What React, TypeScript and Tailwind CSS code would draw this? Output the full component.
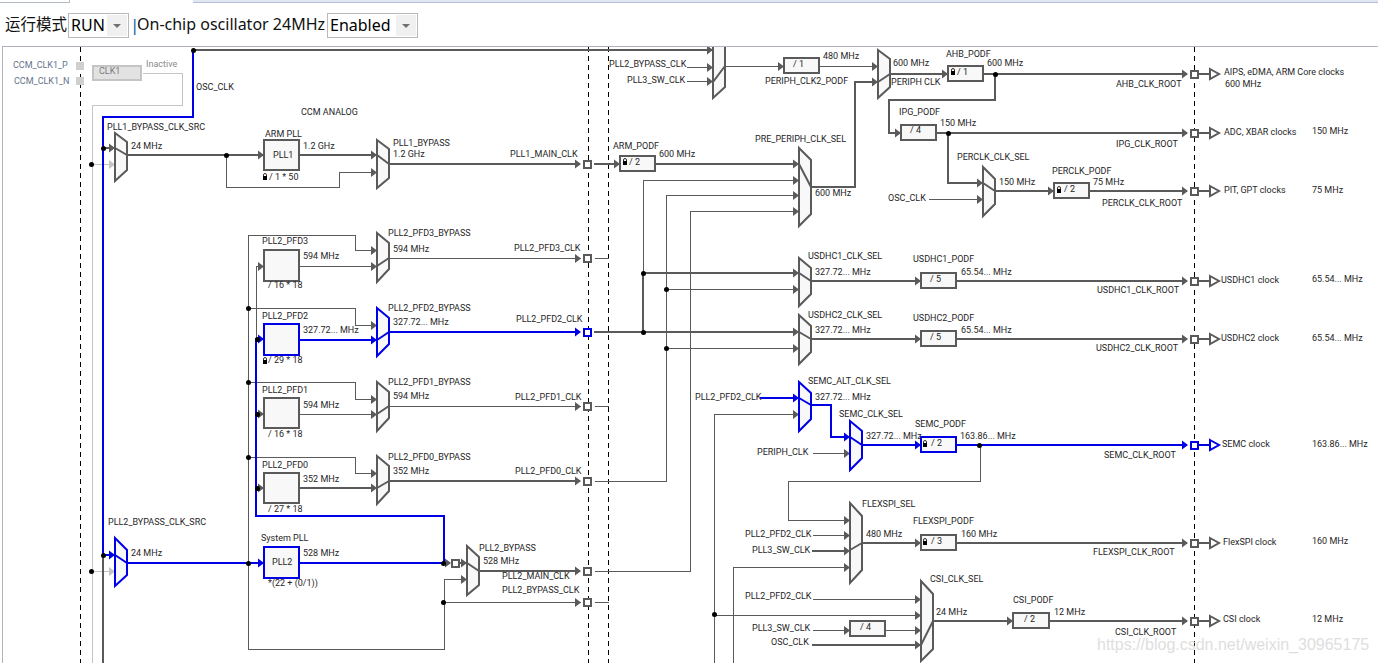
import React from "react";

const G = "#5a5a5a";
const B = "#0000e6";
const L = "#c4c4c4";

type P = [number, number];
type Wire = { p: P[]; c?: string; w?: number; a?: boolean };

const thick = (p: P[], a = true): Wire => ({ p, c: G, w: 2, a });
const thin = (p: P[], a = true): Wire => ({ p, c: G, w: 1, a });
const blue = (p: P[], a = true): Wire => ({ p, c: B, w: 2, a });
const light = (p: P[], a = false): Wire => ({ p, c: L, w: 1, a });

const wires: Wire[] = [
  light([[142, 73], [182, 73], [182, 105], [92, 105], [92, 663]]),
  light([[92, 164], [114, 164]], true),
  light([[92, 571], [114, 571]], true),
  thick([[103, 555], [103, 663]], false),
  thick([[193, 50], [712, 50]]),
  thick([[103, 148], [114, 148]]),
  thick([[127, 155], [263, 155]]),
  thick([[299, 155], [376, 155]]),
  thin([[226, 155], [226, 187], [339, 187], [339, 172], [376, 172]]),
  thick([[389, 164], [580, 164]]),
  thick([[594, 164], [619, 164]]),
  thick([[655, 164], [798, 164]]),
  thin([[686, 67], [712, 67]]),
  thin([[686, 81], [712, 81]]),
  thin([[725, 66], [783, 66]]),
  thin([[819, 66], [877, 66]]),
  thick([[811, 187], [855, 187], [855, 82], [877, 82]]),
  thick([[890, 74], [947, 74]]),
  thick([[983, 74], [1187, 74]]),
  thick([[995, 74], [995, 100], [889, 100], [889, 133], [900, 133]]),
  thick([[936, 133], [1187, 133]]),
  thick([[948, 133], [948, 183], [982, 183]]),
  thin([[928, 199], [982, 199]]),
  thick([[995, 191], [1053, 191]]),
  thick([[1089, 191], [1187, 191]]),
  thin([[643, 273], [643, 180], [798, 180]]),
  thin([[666, 481], [666, 195], [798, 195]]),
  thin([[690, 571], [690, 211], [798, 211]]),
  thick([[643, 273], [643, 332]], false),
  thick([[643, 273], [798, 273]]),
  thin([[666, 289], [798, 289]]),
  thick([[594, 332], [798, 332]]),
  thin([[666, 348], [798, 348]]),
  thick([[811, 281], [920, 281]]),
  thick([[956, 281], [1187, 281]]),
  thick([[811, 339], [920, 339]]),
  thick([[956, 339], [1187, 339]]),
  // PFD group
  thin([[248, 649], [248, 235], [355, 235], [355, 250], [376, 250]]),
  thin([[256, 339], [256, 266], [263, 266]]),
  thin([[299, 266], [376, 266]]),
  thin([[389, 258], [580, 258]]),
  thin([[594, 258], [608, 258]], false),
  thin([[248, 308], [355, 308], [355, 325], [376, 325]]),
  thin([[248, 382], [355, 382], [355, 399], [376, 399]]),
  thin([[299, 414], [376, 414]]),
  thin([[389, 406], [580, 406]]),
  thin([[594, 406], [608, 406]], false),
  thick([[257, 414], [263, 414]]),
  thin([[248, 457], [355, 457], [355, 473], [376, 473]]),
  thick([[299, 488], [376, 488]]),
  thick([[257, 488], [263, 488]]),
  thick([[389, 481], [580, 481]]),
  thin([[594, 481], [666, 481]], false),
  thick([[444, 563], [450, 563]]),
  thick([[460, 563], [466, 563]]),
  thin([[248, 649], [444, 649], [444, 579], [466, 579]]),
  thin([[444, 602], [580, 602]]),
  thin([[594, 602], [608, 602]], false),
  thick([[479, 571], [580, 571]]),
  thin([[594, 571], [690, 571]], false),
  // right column
  thin([[714, 663], [714, 414], [798, 414]]),
  thin([[812, 453], [849, 453]]),
  thin([[980, 445], [980, 481], [788, 481], [788, 520], [849, 520]]),
  thin([[812, 535], [849, 535]]),
  thick([[812, 551], [849, 551]]),
  thin([[733, 663], [733, 567], [849, 567]]),
  thick([[862, 543], [920, 543]]),
  thick([[956, 543], [1187, 543]]),
  thin([[812, 599], [920, 599]]),
  thin([[714, 615], [920, 615]]),
  thin([[812, 630], [849, 630]]),
  thin([[885, 630], [920, 630]]),
  thick([[812, 645], [920, 645]]),
  thick([[933, 621], [1012, 621]]),
  thick([[1049, 621], [1187, 621]]),
  // active blue path
  blue([[193, 50], [193, 117], [103, 117], [103, 555], [114, 555]]),
  blue([[127, 563], [263, 563]]),
  blue([[299, 563], [444, 563]], false),
  blue([[444, 563], [444, 516], [256, 516], [256, 339], [263, 339]]),
  blue([[299, 340], [376, 340]]),
  blue([[389, 332], [580, 332]]),
  blue([[760, 398], [798, 398]]),
  blue([[811, 405], [831, 405], [831, 437], [849, 437]]),
  blue([[862, 445], [920, 445]]),
  blue([[956, 445], [1187, 445]]),
];

type Mux = { p: P[]; s: [P, P]; c?: string };
const mux = (x: number, t: number, rt: number, rb: number, b: number, a: number, o: number, w = 12, c = G): Mux => ({
  p: [[x, t], [x + w, rt], [x + w, rb], [x, b]],
  s: [[x, a], [x + w, o]],
  c,
});

const muxes: Mux[] = [
  mux(115, 133, 142, 170, 181, 148, 155),
  mux(377, 140, 149, 178, 188, 155, 164),
  mux(713, 30, 40, 87, 98, 82, 66),
  mux(878, 50, 59, 87, 98, 82, 74),
  mux(799, 148, 160, 214, 226, 164, 187),
  mux(983, 167, 179, 204, 216, 183, 191),
  mux(377, 233, 243, 269, 282, 266, 258),
  mux(377, 308, 318, 344, 356, 340, 332, 12, B),
  mux(377, 382, 392, 418, 431, 414, 406),
  mux(377, 456, 466, 491, 504, 488, 481),
  mux(115, 538, 550, 575, 586, 555, 563, 12, B),
  mux(467, 546, 557, 585, 595, 563, 571),
  mux(799, 258, 268, 294, 306, 273, 281),
  mux(799, 315, 326, 352, 364, 332, 339),
  mux(799, 382, 393, 419, 431, 398, 405, 12, B),
  mux(850, 421, 431, 458, 470, 437, 445, 12, B),
  mux(850, 503, 516, 570, 583, 550, 543),
  mux(921, 581, 594, 649, 661, 645, 621),
];

type Box = [number, number, number, number, string?];
const boxes: Box[] = [
  [264, 140, 35, 30],
  [620, 156, 35, 15],
  [784, 58, 35, 15],
  [948, 66, 35, 15],
  [901, 125, 35, 15],
  [1054, 183, 35, 15],
  [264, 250, 35, 31],
  [264, 324, 35, 31, B],
  [264, 398, 35, 30],
  [264, 473, 35, 30],
  [264, 547, 35, 31, B],
  [921, 273, 35, 15],
  [921, 331, 35, 15],
  [921, 437, 35, 15, B],
  [921, 535, 35, 15],
  [850, 621, 35, 15],
  [1013, 613, 36, 15],
];

const pads: [number, number, string?][] = [
  [587, 164], [587, 258], [587, 332, B], [587, 406], [587, 481], [587, 571], [587, 602], [455, 563],
  [1194, 74], [1194, 133], [1194, 191], [1194, 281], [1194, 339], [1194, 445, B], [1194, 543], [1194, 621],
];

const outs: [number, string?][] = [[74], [133], [191], [281], [339], [445, B], [543], [621]];

const dots: P[] = [
  [193, 50], [103, 148], [91, 164], [226, 155], [103, 555], [91, 571],
  [248, 308], [248, 382], [248, 457], [248, 563], [257, 339], [257, 414], [257, 488],
  [443, 563], [443, 602], [995, 74], [948, 133], [643, 273], [643, 332], [666, 289], [666, 348], [979, 445], [714, 614],
];

const locks: P[] = [
  [265, 177], [625, 162], [953, 72], [1059, 190], [265, 361], [925, 444], [925, 542],
];

type T = [number, number, string, string?];
const labels: T[] = [
  [13, 65, "CCM_CLK1_P", "#64748b"], [14, 81, "CCM_CLK1_N", "#64748b"], [99, 71, "CLK1", "#7a7a7a"], [146, 64, "Inactive", "#8a8a8a"],
  [196, 87, "OSC_CLK"], [301, 112, "CCM ANALOG"], [107, 127, "PLL1_BYPASS_CLK_SRC"], [131, 146, "24 MHz"],
  [265, 134, "ARM PLL"], [273, 155, "PLL1"], [303, 146, "1.2 GHz"], [269, 177, "/ 1 * 50"], [393, 143, "PLL1_BYPASS"], [393, 154, "1.2 GHz"],
  [510, 154, "PLL1_MAIN_CLK"], [613, 146, "ARM_PODF"], [629, 162, "/ 2"], [659, 154, "600 MHz"],
  [609, 64, "PLL2_BYPASS_CLK"], [627, 80, "PLL3_SW_CLK"], [731, 44, "480 MHz"], [823, 56, "480 MHz"], [793, 64, "/ 1"], [765, 81, "PERIPH_CLK2_PODF"],
  [755, 139, "PRE_PERIPH_CLK_SEL"], [815, 193, "600 MHz"], [893, 63, "600 MHz"], [891, 82, "PERIPH CLK"], [946, 54, "AHB_PODF"], [957, 72, "/ 1"], [987, 63, "600 MHz"],
  [1116, 84, "AHB_CLK_ROOT"], [1224, 72, "AIPS, eDMA, ARM Core clocks"], [1225, 84, "600 MHz"], [1224, 44, "24 MHz"],
  [899, 112, "IPG_PODF"], [910, 130, "/ 4"], [940, 123, "150 MHz"], [1116, 144, "IPG_CLK_ROOT"], [1224, 132, "ADC, XBAR clocks"], [1312, 131, "150 MHz"],
  [957, 157, "PERCLK_CLK_SEL"], [999, 182, "150 MHz"], [1052, 171, "PERCLK_PODF"], [1093, 182, "75 MHz"], [1064, 189, "/ 2"], [1102, 203, "PERCLK_CLK_ROOT"],
  [1224, 190, "PIT, GPT clocks"], [1312, 190, "75 MHz"], [888, 198, "OSC_CLK"],
  [262, 241, "PLL2_PFD3"], [303, 256, "594 MHz"], [268, 285, "/ 16 * 18"], [388, 233, "PLL2_PFD3_BYPASS"], [393, 249, "594 MHz"], [514, 248, "PLL2_PFD3_CLK"],
  [262, 316, "PLL2_PFD2"], [303, 330, "327.72... MHz"], [268, 360, "/ 29 * 18"], [388, 308, "PLL2_PFD2_BYPASS"], [393, 322, "327.72... MHz"], [516, 319, "PLL2_PFD2_CLK"],
  [262, 390, "PLL2_PFD1"], [303, 405, "594 MHz"], [268, 434, "/ 16 * 18"], [388, 382, "PLL2_PFD1_BYPASS"], [393, 396, "594 MHz"], [515, 397, "PLL2_PFD1_CLK"],
  [262, 465, "PLL2_PFD0"], [303, 479, "352 MHz"], [268, 509, "/ 27 * 18"], [388, 457, "PLL2_PFD0_BYPASS"], [393, 471, "352 MHz"], [515, 471, "PLL2_PFD0_CLK"],
  [108, 522, "PLL2_BYPASS_CLK_SRC"], [131, 553, "24 MHz"], [261, 538, "System PLL"], [272, 562, "PLL2"], [303, 553, "528 MHz"], [268, 583, "*(22 + (0/1))"],
  [479, 548, "PLL2_BYPASS"], [483, 561, "528 MHz"], [502, 576, "PLL2_MAIN_CLK"], [502, 590, "PLL2_BYPASS_CLK"],
  [808, 256, "USDHC1_CLK_SEL"], [815, 272, "327.72... MHz"], [913, 259, "USDHC1_PODF"], [930, 279, "/ 5"], [961, 272, "65.54... MHz"], [1097, 290, "USDHC1_CLK_ROOT"], [1221, 280, "USDHC1 clock"], [1312, 279, "65.54... MHz"],
  [808, 315, "USDHC2_CLK_SEL"], [815, 330, "327.72... MHz"], [913, 318, "USDHC2_PODF"], [930, 337, "/ 5"], [961, 330, "65.54... MHz"], [1096, 348, "USDHC2_CLK_ROOT"], [1221, 338, "USDHC2 clock"], [1312, 338, "65.54... MHz"],
  [808, 381, "SEMC_ALT_CLK_SEL"], [815, 397, "327.72... MHz"], [695, 397, "PLL2_PFD2_CLK"], [839, 414, "SEMC_CLK_SEL"], [866, 436, "327.72... MHz"], [915, 424, "SEMC_PODF"], [931, 443, "/ 2"], [960, 436, "163.86... MHz"], [1104, 455, "SEMC_CLK_ROOT"], [1222, 444, "SEMC clock"], [1312, 444, "163.86... MHz"],
  [757, 452, "PERIPH_CLK"], [862, 504, "FLEXSPI_SEL"], [866, 534, "480 MHz"], [913, 521, "FLEXSPI_PODF"], [961, 534, "160 MHz"], [931, 541, "/ 3"], [745, 534, "PLL2_PFD2_CLK"], [752, 550, "PLL3_SW_CLK"], [1093, 552, "FLEXSPI_CLK_ROOT"], [1223, 542, "FlexSPI clock"], [1312, 541, "160 MHz"],
  [930, 579, "CSI_CLK_SEL"], [936, 612, "24 MHz"], [1013, 600, "CSI_PODF"], [1054, 612, "12 MHz"], [1024, 619, "/ 2"], [1115, 632, "CSI_CLK_ROOT"], [1223, 619, "CSI clock"], [1312, 619, "12 MHz"],
  [745, 596, "PLL2_PFD2_CLK"], [752, 628, "PLL3_SW_CLK"], [860, 627, "/ 4"], [771, 642, "OSC_CLK"],
];

function Select({ value, width }: { value: string; width: string }) {
  return (
    <div className={`flex h-[25px] items-stretch border border-[#b9b9b9] bg-white ${width}`}>
      <span className="flex-1 pl-[2px] text-[16px] leading-[23px] text-black">{value}</span>
      <span className="m-[1px] flex w-[20px] items-center justify-center bg-[#f0f0f0]">
        <span className="h-0 w-0 border-x-[4px] border-t-[4px] border-x-transparent border-t-[#707070]" />
      </span>
    </div>
  );
}

export default function App() {
  return (
    <div className="flex h-[663px] w-[1378px] flex-col overflow-hidden bg-white font-['Noto_Sans','Noto_Sans_CJK_SC',sans-serif]">
      <div className="flex h-[3px] shrink-0">
        <div className="w-[70px] border-b border-r border-[#b5bcc8]" />
        <div className="w-[123px]" />
        <div className="flex-1 border-b border-[#b4c0d8] bg-[#dfe6f2]" />
      </div>
      <div className="flex h-[43px] shrink-0 items-start pt-[10px]">
        <span className="ml-[5px] w-[63px] text-[15.5px] leading-[23px] text-[#111]">运行模式</span>
        <Select value="RUN" width="w-[61px]" />
        <span className="ml-[1px] w-[7px] text-[17px] leading-[23px] text-[#0b5fa5]">|</span>
        <span className="w-[190px] whitespace-nowrap text-[16px] leading-[23px] text-[#111]">On-chip oscillator 24MHz</span>
        <Select value="Enabled" width="w-[91px]" />
      </div>
      <div className="relative ml-[2px] flex-1 overflow-hidden border-l border-t border-[#b2b2ba] bg-white">
        <svg className="absolute left-0 top-0" width={1375} height={616} viewBox="3 47 1375 616">
          {[80, 588, 608, 1194].map((x) => (
            <line key={x} x1={x + 0.5} y1={47} x2={x + 0.5} y2={663} stroke="#000" strokeWidth={1} strokeDasharray="5 4" />
          ))}
          <rect x={93} y={66} width={48} height={14} fill="#e2e2e2" stroke={L} strokeWidth={2} />
          <rect x={76} y={62} width={8} height={8} fill="#cfcfcf" />
          <rect x={76} y={77} width={8} height={8} fill="#cfcfcf" />
          {wires.map((w, i) => {
            const off = w.w === 1 ? 0.5 : 0;
            const last = w.p[w.p.length - 1];
            return (
              <g key={i}>
                <polyline
                  points={w.p.map(([x, y]) => `${x + off},${y + off}`).join(" ")}
                  fill="none"
                  stroke={w.c}
                  strokeWidth={w.w}
                  shapeRendering="crispEdges"
                />
                {w.a && (
                  <polygon
                    points={`${last[0] - 5},${last[1] - 4.5 + off} ${last[0] + 1},${last[1] + off} ${last[0] - 5},${last[1] + 4.5 + off}`}
                    fill={w.c}
                  />
                )}
              </g>
            );
          })}
          {muxes.map((m, i) => (
            <g key={i}>
              <polygon points={m.p.map((q) => q.join(",")).join(" ")} fill="#f8f8f8" stroke={m.c} strokeWidth={2} />
              <line x1={m.s[0][0]} y1={m.s[0][1]} x2={m.s[1][0]} y2={m.s[1][1]} stroke={m.c} strokeWidth={2} />
            </g>
          ))}
          {boxes.map(([x, y, w, h, c], i) => (
            <rect key={i} x={x} y={y} width={w} height={h} fill="#f8f8f8" stroke={c ?? G} strokeWidth={2} shapeRendering="crispEdges" />
          ))}
          {pads.map(([x, y, c], i) => (
            <rect key={i} x={x - 3} y={y - 3} width={7} height={7} fill="#fff" stroke={c ?? G} strokeWidth={2} shapeRendering="crispEdges" />
          ))}
          {outs.map(([y, c], i) => (
            <g key={i}>
              <line x1={1198} y1={y} x2={1209} y2={y} stroke={c ?? G} strokeWidth={2} />
              <polygon points={`1210,${y - 5} 1219,${y} 1210,${y + 5}`} fill="#fff" stroke={c ?? G} strokeWidth={2} />
            </g>
          ))}
          {dots.map(([x, y], i) => (
            <circle key={i} cx={x + 0.5} cy={y + 0.5} r={2.5} fill="#000" />
          ))}
          {locks.map(([x, y], i) => (
            <g key={i}>
              <rect x={x - 2} y={y - 1} width={4} height={4} fill="#000" />
              <path d={`M${x - 1.5} ${y - 1} v-1 a1.5 1.5 0 0 1 3 0 v1`} fill="none" stroke="#000" strokeWidth={0.8} />
            </g>
          ))}
        </svg>
        {labels.map(([x, y, t, c], i) => (
          <span
            key={i}
            className="absolute whitespace-nowrap font-['Roboto',sans-serif] text-[9px] leading-[12px] text-[#262626]"
            style={{ left: x - 3, top: y - 53, color: c }}
          >
            {t}
          </span>
        ))}
        <span className="absolute left-[1094px] top-[588px] whitespace-nowrap font-['Liberation_Sans',sans-serif] text-[16px] leading-[20px] text-[#dedede]">
          https://blog.csdn.net/weixin_30965175
        </span>
      </div>
    </div>
  );
}
